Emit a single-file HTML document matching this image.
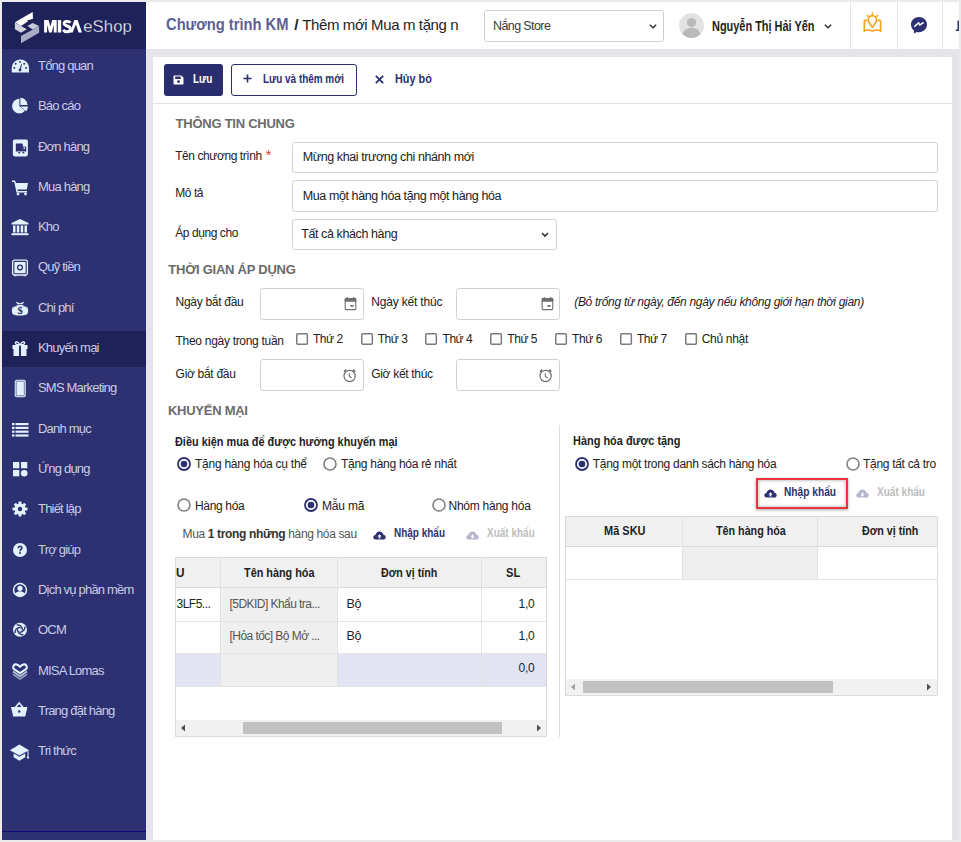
<!DOCTYPE html>
<html><head><meta charset="utf-8">
<style>
*{box-sizing:border-box}
html,body{margin:0;padding:0}
body{width:961px;height:842px;position:relative;overflow:hidden;background:#ebebeb;font-family:"Liberation Sans",sans-serif;font-size:12px;color:#333}
.a{position:absolute}
.t{position:absolute;white-space:nowrap;line-height:1}
.mi{position:absolute;left:38px;font-size:13px;letter-spacing:-0.8px;color:#c9cce6;line-height:1;white-space:nowrap}
.ic{position:absolute;left:11px;width:18px;height:18px;overflow:visible}
</style></head><body>
<div class="a" style="left:2px;top:2px;width:144px;height:838px;background:#2d3071"></div>
<div class="a" style="left:2px;top:2px;width:144px;height:47px;background:#1f2159"></div>
<div class="a" style="left:2px;top:331px;width:144px;height:36px;background:#1f2159"></div>
<div class="a" style="left:2px;top:831px;width:144px;height:1px;background:#170a7a"></div>
<div class="a" style="left:146px;top:2px;width:813px;height:47px;background:#fff"></div>
<div class="a" style="left:146px;top:49px;width:813px;height:791px;background:#e4e5eb"></div>
<div class="a" style="left:153px;top:57px;width:799px;height:783px;background:#fff"></div>
<svg class="a" style="left:12px;top:8px;" width="30" height="38" viewBox="12 8 30 38"><polygon points="14.9,22.2 32.7,12.1 33,18.8 27.3,20.6 27.8,21.5 21,26" fill="#fff"/><polygon points="14.9,22.4 21,26 26.9,29.2 21,32.8 14.9,29.2" fill="#d3d3e2"/><polygon points="27.3,26 32.7,22.9 39.1,26 32.7,29.6" fill="#c9c9dc"/><polygon points="21,36 39.1,26 39.1,32.8 21,43.2" fill="#a9aac3"/></svg>
<svg class="a" style="left:40px;top:14px;" width="100" height="26" viewBox="40 14 100 26"><polygon points="44.1,32.5 44.1,20.1 48.6,20.1 50.4,26.6 52.2,20.1 56.7,20.1 56.7,32.5 53.7,32.5 53.7,24.8 51.7,32.5 49.1,32.5 47.1,24.8 47.1,32.5" fill="#fff"/><rect x="57.8" y="20.1" width="3.4" height="12.4" fill="#fff"/><path d="M70.3 22.8C69.3 21.2 67.9 21.4 66.6 21.4C64.9 21.4 64.2 22.5 64.2 23.6C64.2 26.8 70.4 25.2 70.4 28.9C70.4 30.6 69 31.7 67 31.7C65.3 31.7 63.9 31.1 63.1 29.7" fill="none" stroke="#fff" stroke-width="2.9"/><polygon points="70,32.5 74.3,20.1 77.6,20.1 82,32.5 78.6,32.5 75.9,24.6 72.6,32.5" fill="#fff"/><text x="83.2" y="32.3" font-family="Liberation Sans" font-size="16.6" letter-spacing="0.15" fill="#ffffff" stroke="#1f2159" stroke-width="0.35">eShop</text></svg>
<svg class="ic" style="top:56.9px" viewBox="0 0 18 18"><path d="M0.8 15.6V11.5C0.8 6 4.5 2.5 9.4 2.5C14.3 2.5 18 6 18 11.5V15.6Z" fill="#e4f1fc"/><g fill="#2d3071"><circle cx="3.3" cy="11" r="0.95"/><circle cx="4.7" cy="6.8" r="0.95"/><circle cx="9" cy="4.9" r="0.95"/><circle cx="13.2" cy="6.8" r="0.95"/><circle cx="15" cy="11" r="0.95"/><path d="M8.3 12.8L10.4 6.8L11 7L9.7 13.2Z"/><circle cx="9" cy="13.1" r="1.4"/></g></svg>
<div class="mi" style="top:59.0px">Tổng quan</div>
<svg class="ic" style="top:97.2px" viewBox="0 0 18 18"><path d="M8.4 9.1L8.4 1.8A7.3 7.3 0 1 0 14 13.8Z" fill="#e4f1fc"/><path d="M9.3 8.1L9.3 0.8A7.3 7.3 0 0 1 16.6 8.1Z" fill="#e4f1fc"/><path d="M9.6 9.6L16.9 9.6A7.3 7.3 0 0 1 15.2 14.3Z" fill="#e4f1fc"/></svg>
<div class="mi" style="top:99.0px">Báo cáo</div>
<svg class="ic" style="top:137.5px" viewBox="0 0 18 18"><rect x="1.9" y="1.4" width="15" height="17" rx="1.8" fill="#e4f1fc"/><rect x="4.8" y="5.4" width="7" height="8.2" rx="0.6" fill="#2d3071"/><path d="M11.6 8.4H14.2L15.2 9.6V13.6H11.6Z" fill="#2d3071"/><rect x="12.6" y="9.3" width="1.4" height="1.6" fill="#e4f1fc"/><circle cx="8.2" cy="14.6" r="1.5" fill="#e4f1fc"/><circle cx="8.2" cy="14.6" r="1" fill="#2d3071"/><circle cx="12.4" cy="14.6" r="1.5" fill="#e4f1fc"/><circle cx="12.4" cy="14.6" r="1" fill="#2d3071"/></svg>
<div class="mi" style="top:140.0px">Đơn hàng</div>
<svg class="ic" style="top:177.8px" viewBox="0 0 18 18"><path d="M1 2.5H4L5 5H17L15.8 11.5H6.5L6.8 13H16V14.5H5.5L3.2 4H1Z" fill="#e4f1fc"/><circle cx="7" cy="16" r="1.4" fill="#e4f1fc"/><circle cx="14.5" cy="16" r="1.4" fill="#e4f1fc"/></svg>
<div class="mi" style="top:180.0px">Mua hàng</div>
<svg class="ic" style="top:218.1px" viewBox="0 0 18 18"><path d="M9 1L17.5 5V6.5H0.5V5Z" fill="#e4f1fc"/><rect x="2" y="7.5" width="2.5" height="7" fill="#e4f1fc"/><rect x="5.8" y="7.5" width="2.5" height="7" fill="#e4f1fc"/><rect x="9.7" y="7.5" width="2.5" height="7" fill="#e4f1fc"/><rect x="13.5" y="7.5" width="2.5" height="7" fill="#e4f1fc"/><rect x="0.5" y="15.2" width="17" height="2" fill="#e4f1fc"/></svg>
<div class="mi" style="top:220.0px">Kho</div>
<svg class="ic" style="top:258.5px" viewBox="0 0 18 18"><rect x="1.6" y="1.2" width="14.8" height="14.8" rx="1.8" fill="none" stroke="#e4f1fc" stroke-width="1.3"/><rect x="3.4" y="3" width="11.2" height="11.2" fill="#e4f1fc"/><circle cx="9" cy="8.6" r="2.4" fill="none" stroke="#2d3071" stroke-width="1.3"/><rect x="3" y="16" width="2.5" height="1.2" fill="#e4f1fc"/><rect x="12.5" y="16" width="2.5" height="1.2" fill="#e4f1fc"/></svg>
<div class="mi" style="top:260.0px">Quỹ tiền</div>
<svg class="ic" style="top:298.8px" viewBox="0 0 18 18"><ellipse cx="4.2" cy="11.5" rx="3.3" ry="4.6" fill="#e4f1fc"/><ellipse cx="13.8" cy="11.5" rx="3.3" ry="4.6" fill="#e4f1fc"/><path d="M4.5 2.5L9 4.2L13.5 2.5L11.3 5.6C14.5 7 15.6 10.5 15.6 13C15.6 15.5 13.8 16.5 12 16.5H6C4.2 16.5 2.4 15.5 2.4 13C2.4 10.5 3.5 7 6.7 5.6Z" fill="#e4f1fc"/><path d="M6 5.5L12 5.5" stroke="#2d3071" stroke-width="0.7"/><path d="M2 8.5Q4 6.5 6.5 6.6M16 8.5Q14 6.5 11.5 6.6" fill="none" stroke="#2d3071" stroke-width="0.7"/><text x="9" y="15.3" font-size="10.5" font-weight="700" text-anchor="middle" fill="#2d3071" font-family="Liberation Serif">$</text></svg>
<div class="mi" style="top:301.0px">Chi phí</div>
<svg class="ic" style="top:339.1px" viewBox="0 0 18 18"><rect x="1.5" y="6" width="15" height="4" fill="#e4f1fc"/><rect x="2.5" y="10" width="13" height="7" fill="#e4f1fc"/><rect x="8" y="6" width="2" height="11" fill="#2d3071"/><path d="M9 6C7 2 4 2 4.5 4.5C5 6 9 6 9 6Z M9 6C11 2 14 2 13.5 4.5C13 6 9 6 9 6Z" fill="none" stroke="#e4f1fc" stroke-width="1.4"/></svg>
<div class="mi" style="top:341.0px">Khuyến mại</div>
<svg class="ic" style="top:379.4px" viewBox="0 0 18 18"><rect x="4" y="1" width="10.5" height="17" rx="1.8" fill="#e4f1fc" stroke="#e4f1fc" stroke-width="0.5"/><rect x="5.2" y="2.2" width="8.1" height="14.6" rx="1" fill="none" stroke="#2d3071" stroke-width="0.6"/></svg>
<div class="mi" style="top:381.0px">SMS Marketing</div>
<svg class="ic" style="top:419.7px" viewBox="0 0 18 18"><rect x="1" y="3" width="2.5" height="2.2" fill="#e4f1fc"/><rect x="4.5" y="3" width="13" height="2.2" fill="#e4f1fc"/><rect x="1" y="6.8" width="2.5" height="2.2" fill="#e4f1fc"/><rect x="4.5" y="6.8" width="13" height="2.2" fill="#e4f1fc"/><rect x="1" y="10.6" width="2.5" height="2.2" fill="#e4f1fc"/><rect x="4.5" y="10.6" width="13" height="2.2" fill="#e4f1fc"/><rect x="1" y="14.4" width="2.5" height="2.2" fill="#e4f1fc"/><rect x="4.5" y="14.4" width="13" height="2.2" fill="#e4f1fc"/></svg>
<div class="mi" style="top:422.0px">Danh mục</div>
<svg class="ic" style="top:460.0px" viewBox="0 0 18 18"><rect x="2" y="2" width="6.3" height="6.3" fill="#e4f1fc"/><rect x="10" y="2" width="6.3" height="6.3" fill="#e4f1fc"/><rect x="2" y="10" width="6.3" height="6.3" fill="#e4f1fc"/><circle cx="13.2" cy="13.2" r="3.3" fill="#e4f1fc"/></svg>
<div class="mi" style="top:462.0px">Ứng dụng</div>
<svg class="ic" style="top:500.3px" viewBox="0 0 18 18"><g fill="#e4f1fc"><circle cx="9" cy="9" r="5.5"/><rect x="7.5" y="1.5" width="3" height="15" rx="0.8"/><rect x="7.5" y="1.5" width="3" height="15" rx="0.8" transform="rotate(45 9 9)"/><rect x="7.5" y="1.5" width="3" height="15" rx="0.8" transform="rotate(90 9 9)"/><rect x="7.5" y="1.5" width="3" height="15" rx="0.8" transform="rotate(135 9 9)"/></g><circle cx="9" cy="9" r="2.2" fill="#2d3071"/></svg>
<div class="mi" style="top:502.0px">Thiết lập</div>
<svg class="ic" style="top:540.6px" viewBox="0 0 18 18"><circle cx="9" cy="9" r="7" fill="#e4f1fc"/><path d="M6.5 7.2C6.5 5.5 7.6 4.6 9.1 4.6C10.6 4.6 11.7 5.5 11.7 6.9C11.7 8.6 9.8 8.7 9.8 10.3H8.2C8.2 8 10 7.9 10 6.9C10 6.4 9.6 6.1 9.1 6.1C8.5 6.1 8.1 6.5 8.1 7.2Z" fill="#2d3071"/><rect x="8.2" y="11.2" width="1.7" height="1.7" fill="#2d3071"/></svg>
<div class="mi" style="top:543.0px">Trợ giúp</div>
<svg class="ic" style="top:580.9px" viewBox="0 0 18 18"><circle cx="9" cy="9" r="7.2" fill="#e4f1fc"/><circle cx="9" cy="9" r="5.7" fill="#2d3071"/><circle cx="9" cy="7.3" r="2.6" fill="#e4f1fc"/><path d="M4.2 13.2C5 11 6.8 10.2 9 10.2C11.2 10.2 13 11 13.8 13.2C12.6 14.6 10.9 15.3 9 15.3C7.1 15.3 5.4 14.6 4.2 13.2Z" fill="#e4f1fc"/></svg>
<div class="mi" style="top:583.0px">Dịch vụ phần mềm</div>
<svg class="ic" style="top:621.2px" viewBox="0 0 18 18"><circle cx="9" cy="8.8" r="7" fill="#e4f1fc"/><g fill="none" stroke="#2d3071" stroke-width="1.3"><path d="M11.5 8.8A5.2 5.2 0 0 0 5.6 3.9"/><path d="M11.5 8.8A5.2 5.2 0 0 0 5.6 3.9" transform="rotate(90 9 8.8)"/><path d="M11.5 8.8A5.2 5.2 0 0 0 5.6 3.9" transform="rotate(180 9 8.8)"/><path d="M11.5 8.8A5.2 5.2 0 0 0 5.6 3.9" transform="rotate(270 9 8.8)"/></g><circle cx="9" cy="8.8" r="2.6" fill="#2d3071"/><circle cx="9" cy="8.8" r="1.9" fill="#e4f1fc"/></svg>
<div class="mi" style="top:623.0px">OCM</div>
<svg class="ic" style="top:661.6px" viewBox="0 0 18 18"><g fill="none" stroke-linejoin="round"><path d="M2 12.3L9 17L16 12.3" stroke="#e4f1fc" stroke-opacity="0.55" stroke-width="1.8"/><path d="M2 9.6L9 14.2L16 9.6" stroke="#e4f1fc" stroke-opacity="0.75" stroke-width="1.8"/><path d="M9 11.2L3 7.2C1.3 5.2 2.4 2.2 5 2.4C6.8 2.5 8 3.7 9 4.8C10 3.7 11.2 2.5 13 2.4C15.6 2.2 16.7 5.2 15 7.2Z" stroke="#e4f1fc" stroke-width="2.1"/></g></svg>
<div class="mi" style="top:664.0px">MISA Lomas</div>
<svg class="ic" style="top:701.9px" viewBox="0 0 18 18"><path d="M0 5.1H16.4L14.2 14.4H2.2Z" fill="#e4f1fc"/><path d="M4.5 5.3L8.2 1L11.9 5.3" fill="none" stroke="#e4f1fc" stroke-width="1.6"/><circle cx="8.2" cy="9.5" r="1.2" fill="#2d3071"/></svg>
<div class="mi" style="top:704.0px">Trang đặt hàng</div>
<svg class="ic" style="top:742.2px" viewBox="0 0 18 18"><path d="M8.4 2.6L18 8.2L8.4 13.4L-1.2 8.2Z" fill="#e4f1fc"/><path d="M2.6 11.4V15.3L8.4 18.8L14.2 15.3V11.4L8.4 14.8Z" fill="#e4f1fc"/><path d="M17 8.5V15" stroke="#e4f1fc" stroke-width="1"/><circle cx="17" cy="15.6" r="1.1" fill="#e4f1fc"/></svg>
<div class="mi" style="top:744.0px">Tri thức</div>
<div class="t" style="left:165.7px;top:17.00px;font-size:16px;font-weight:700;color:#5c5f96;letter-spacing:0px;font-style:normal;transform:scaleX(0.9200);transform-origin:0 0">Chương trình KM</div>
<div class="t" style="left:294.3px;top:17.00px;font-size:15.5px;font-weight:700;color:#222;letter-spacing:0px;font-style:normal;">/</div>
<div class="t" style="left:302.2px;top:17.00px;font-size:15px;font-weight:400;color:#1e1e1e;letter-spacing:-0.38px;font-style:normal;">Thêm mới Mua m tặng n</div>
<div class="a" style="left:484px;top:10px;width:180px;height:32px;border:1px solid #cfcfcf;border-radius:3px;background:#fff"></div>
<div class="t" style="left:493.0px;top:20.00px;font-size:12.5px;font-weight:400;color:#3a3a3a;letter-spacing:-0.6px;font-style:normal;">Nắng Store</div>
<svg class="a" style="left:649px;top:24px;" width="8" height="5" viewBox="0 0 8 5"><path d="M0.8 0.8L4 3.8L7.2 0.8" fill="none" stroke="#333" stroke-width="1.5"/></svg>
<svg class="a" style="left:679px;top:13px;" width="25" height="25" viewBox="0 0 25 25"><circle cx="12.5" cy="12.5" r="12.5" fill="#e3e3e3"/><circle cx="12.5" cy="9.5" r="4.6" fill="#b9b9b9"/><path d="M3.5 21C5 16.5 8 15 12.5 15C17 15 20 16.5 21.5 21C19 23.5 16 25 12.5 25C9 25 6 23.5 3.5 21Z" fill="#b9b9b9"/></svg>
<div class="t" style="left:711.8px;top:19.00px;font-size:14px;font-weight:700;color:#222;letter-spacing:0px;font-style:normal;transform:scaleX(0.7811);transform-origin:0 0">Nguyễn Thị Hải Yến</div>
<svg class="a" style="left:824px;top:24px;" width="8" height="5" viewBox="0 0 8 5"><path d="M0.8 0.8L4 3.8L7.2 0.8" fill="none" stroke="#333" stroke-width="1.5"/></svg>
<div class="a" style="left:850px;top:2px;width:1px;height:47px;background:#e6e6e6"></div>
<div class="a" style="left:897px;top:2px;width:1px;height:47px;background:#e6e6e6"></div>
<div class="a" style="left:942px;top:2px;width:1px;height:47px;background:#e6e6e6"></div>
<svg class="a" style="left:858px;top:8px;" width="30" height="30" viewBox="0 0 30 30"><g fill="none" stroke="#f7a11a" stroke-width="1.6" stroke-linecap="round" stroke-linejoin="round"><path d="M11.6 15.2A4.3 4.3 0 1 1 17.2 15.2L14.4 19.2Z"/><path d="M8.4 12.4H7Q6.3 12.4 6.3 13.2V23.4M20.4 12.4H21.8Q22.6 12.4 22.6 13.2V23.4"/><path d="M6.3 22.9Q10 21 14.4 23.1Q18.8 21 22.6 22.9"/><path d="M14.4 5V6.2M9.4 7.6L9.9 8.1M19.4 7.6L18.9 8.1"/></g><circle cx="14.4" cy="17.4" r="0.6" fill="#fff"/></svg>
<svg class="a" style="left:910px;top:16px;" width="18" height="18" viewBox="0 0 18 18"><path d="M9 1C4.5 1 1 4.3 1 8.6C1 11 2.1 13 3.9 14.4V17.5L6.8 15.9C7.5 16.1 8.2 16.2 9 16.2C13.5 16.2 17 12.9 17 8.6C17 4.3 13.5 1 9 1Z" fill="#2d3071"/><polyline points="4.3,10.6 8.7,6.7 9.6,9.1 13.6,6.5" fill="none" stroke="#fff" stroke-width="1.5" stroke-linejoin="round"/></svg>
<svg class="a" style="left:953px;top:18px;" width="7" height="14" viewBox="0 0 7 14"><path d="M5.2 2.5V12.2H2.8" fill="none" stroke="#2d3071" stroke-width="1.5"/></svg>
<div class="a" style="left:164px;top:64px;width:59px;height:32px;background:#2b2e6e;border-radius:3px"></div>
<svg class="a" style="left:173px;top:75px;" width="11" height="10" viewBox="0 0 11 10"><path d="M0.5 1.2C0.5 0.8 0.8 0.5 1.2 0.5H8.3L10.5 2.7V8.8C10.5 9.2 10.2 9.5 9.8 9.5H1.2C0.8 9.5 0.5 9.2 0.5 8.8Z" fill="#fff"/><rect x="2.2" y="1.5" width="5.5" height="2.5" fill="#2b2e6e"/><circle cx="5.5" cy="6.6" r="1.4" fill="#2b2e6e"/></svg>
<div class="t" style="left:192.8px;top:73.00px;font-size:12.5px;font-weight:700;color:#fff;letter-spacing:0px;font-style:normal;transform:scaleX(0.8015);transform-origin:0 0">Lưu</div>
<div class="a" style="left:231px;top:64px;width:126px;height:32px;border:1px solid #2b2e6e;border-radius:3px;background:#fff"></div>
<svg class="a" style="left:243px;top:74px;" width="9" height="9" viewBox="0 0 9 9"><path d="M4.5 0.5V8.5M0.5 4.5H8.5" stroke="#2b2e6e" stroke-width="1.6"/></svg>
<div class="t" style="left:262.5px;top:73.00px;font-size:12.5px;font-weight:700;color:#2b2e6e;letter-spacing:0px;font-style:normal;transform:scaleX(0.7942);transform-origin:0 0">Lưu và thêm mới</div>
<svg class="a" style="left:375px;top:75px;" width="9" height="9" viewBox="0 0 9 9"><path d="M0.8 0.8L8.2 8.2M8.2 0.8L0.8 8.2" stroke="#2b2e6e" stroke-width="1.7"/></svg>
<div class="t" style="left:395.0px;top:73.00px;font-size:12.5px;font-weight:700;color:#2b2e6e;letter-spacing:0px;font-style:normal;transform:scaleX(0.8688);transform-origin:0 0">Hủy bỏ</div>
<div class="a" style="left:153px;top:103px;width:799px;height:1px;background:#e3e3e3"></div>
<div class="t" style="left:175.6px;top:117.00px;font-size:13px;font-weight:700;color:#6b6b6b;letter-spacing:-0.25px;font-style:normal;">THÔNG TIN CHUNG</div>
<div class="t" style="left:175.2px;top:150.00px;font-size:12px;font-weight:400;color:#222;letter-spacing:-0.42px;font-style:normal;">Tên chương trình</div>
<div class="t" style="left:265.8px;top:148.00px;font-size:14.5px;font-weight:400;color:#e53935;letter-spacing:0px;font-style:normal;">*</div>
<div class="a" style="left:292px;top:142px;width:646px;height:31px;border:1px solid #d2d2d2;border-radius:3px"></div>
<div class="t" style="left:302.7px;top:151.00px;font-size:12.5px;font-weight:400;color:#222;letter-spacing:-0.4px;font-style:normal;">Mừng khai trương chi nhánh mới</div>
<div class="t" style="left:175.2px;top:187.00px;font-size:12px;font-weight:400;color:#222;letter-spacing:-0.42px;font-style:normal;">Mô tả</div>
<div class="a" style="left:292px;top:180px;width:646px;height:32px;border:1px solid #d2d2d2;border-radius:3px"></div>
<div class="t" style="left:302.7px;top:190.00px;font-size:12.5px;font-weight:400;color:#222;letter-spacing:-0.4px;font-style:normal;">Mua một hàng hóa tặng một hàng hóa</div>
<div class="t" style="left:175.2px;top:227.00px;font-size:12px;font-weight:400;color:#222;letter-spacing:-0.42px;font-style:normal;">Áp dụng cho</div>
<div class="a" style="left:292px;top:219px;width:265px;height:31px;border:1px solid #d2d2d2;border-radius:3px"></div>
<div class="t" style="left:301.2px;top:228.00px;font-size:12.5px;font-weight:400;color:#222;letter-spacing:-0.4px;font-style:normal;">Tất cả khách hàng</div>
<svg class="a" style="left:541px;top:232px;" width="8" height="6" viewBox="0 0 8 6"><path d="M1 1L4 4L7 1" fill="none" stroke="#333" stroke-width="1.6"/></svg>
<div class="t" style="left:168.3px;top:263.00px;font-size:13px;font-weight:700;color:#6b6b6b;letter-spacing:-0.25px;font-style:normal;">THỜI GIAN ÁP DỤNG</div>
<div class="t" style="left:175.6px;top:296.00px;font-size:12px;font-weight:400;color:#222;letter-spacing:-0.3px;font-style:normal;">Ngày bắt đầu</div>
<div class="a" style="left:260px;top:288px;width:104px;height:32px;border:1px solid #d2d2d2;border-radius:3px"></div>
<svg class="a" style="left:344px;top:297px;" width="13" height="14" viewBox="0 0 13 14"><rect x="1.2" y="1.6" width="10.6" height="11" rx="1" fill="none" stroke="#6f6f6f" stroke-width="1.1"/><rect x="0.7" y="1.1" width="11.6" height="3.6" rx="0.8" fill="#6f6f6f"/><rect x="6.3" y="8" width="3.4" height="1.8" rx="0.5" fill="#6f6f6f"/><rect x="2.6" y="0.1" width="1.4" height="1.5" fill="#6f6f6f"/><rect x="9" y="0.1" width="1.4" height="1.5" fill="#6f6f6f"/></svg>
<div class="t" style="left:371.2px;top:296.00px;font-size:12px;font-weight:400;color:#222;letter-spacing:-0.17px;font-style:normal;">Ngày kết thúc</div>
<div class="a" style="left:456px;top:288px;width:104px;height:32px;border:1px solid #d2d2d2;border-radius:3px"></div>
<svg class="a" style="left:541px;top:297px;" width="13" height="14" viewBox="0 0 13 14"><rect x="1.2" y="1.6" width="10.6" height="11" rx="1" fill="none" stroke="#6f6f6f" stroke-width="1.1"/><rect x="0.7" y="1.1" width="11.6" height="3.6" rx="0.8" fill="#6f6f6f"/><rect x="6.3" y="8" width="3.4" height="1.8" rx="0.5" fill="#6f6f6f"/><rect x="2.6" y="0.1" width="1.4" height="1.5" fill="#6f6f6f"/><rect x="9" y="0.1" width="1.4" height="1.5" fill="#6f6f6f"/></svg>
<div class="t" style="left:574.2px;top:296.00px;font-size:12px;font-weight:400;color:#222;letter-spacing:-0.3px;font-style:italic;">(Bỏ trống từ ngày, đến ngày nếu không giới hạn thời gian)</div>
<div class="t" style="left:175.6px;top:335.00px;font-size:12px;font-weight:400;color:#222;letter-spacing:-0.3px;font-style:normal;">Theo ngày trong tuần</div>
<svg class="a" style="left:295.7px;top:332.5px" width="13" height="13" viewBox="0 0 13 13"><rect x="0.75" y="0.75" width="10.6" height="10.6" rx="1" fill="#fff" stroke="#7a7a7a" stroke-width="1.5"/></svg>
<div class="t" style="left:312.9px;top:333.00px;font-size:12px;font-weight:400;color:#222;letter-spacing:-0.45px;font-style:normal;">Thứ 2</div>
<svg class="a" style="left:360.5px;top:332.5px" width="13" height="13" viewBox="0 0 13 13"><rect x="0.75" y="0.75" width="10.6" height="10.6" rx="1" fill="#fff" stroke="#7a7a7a" stroke-width="1.5"/></svg>
<div class="t" style="left:377.7px;top:333.00px;font-size:12px;font-weight:400;color:#222;letter-spacing:-0.45px;font-style:normal;">Thứ 3</div>
<svg class="a" style="left:425.3px;top:332.5px" width="13" height="13" viewBox="0 0 13 13"><rect x="0.75" y="0.75" width="10.6" height="10.6" rx="1" fill="#fff" stroke="#7a7a7a" stroke-width="1.5"/></svg>
<div class="t" style="left:442.5px;top:333.00px;font-size:12px;font-weight:400;color:#222;letter-spacing:-0.45px;font-style:normal;">Thứ 4</div>
<svg class="a" style="left:490.1px;top:332.5px" width="13" height="13" viewBox="0 0 13 13"><rect x="0.75" y="0.75" width="10.6" height="10.6" rx="1" fill="#fff" stroke="#7a7a7a" stroke-width="1.5"/></svg>
<div class="t" style="left:507.3px;top:333.00px;font-size:12px;font-weight:400;color:#222;letter-spacing:-0.45px;font-style:normal;">Thứ 5</div>
<svg class="a" style="left:554.9px;top:332.5px" width="13" height="13" viewBox="0 0 13 13"><rect x="0.75" y="0.75" width="10.6" height="10.6" rx="1" fill="#fff" stroke="#7a7a7a" stroke-width="1.5"/></svg>
<div class="t" style="left:572.1px;top:333.00px;font-size:12px;font-weight:400;color:#222;letter-spacing:-0.45px;font-style:normal;">Thứ 6</div>
<svg class="a" style="left:619.7px;top:332.5px" width="13" height="13" viewBox="0 0 13 13"><rect x="0.75" y="0.75" width="10.6" height="10.6" rx="1" fill="#fff" stroke="#7a7a7a" stroke-width="1.5"/></svg>
<div class="t" style="left:636.9px;top:333.00px;font-size:12px;font-weight:400;color:#222;letter-spacing:-0.45px;font-style:normal;">Thứ 7</div>
<svg class="a" style="left:684.5px;top:332.5px" width="13" height="13" viewBox="0 0 13 13"><rect x="0.75" y="0.75" width="10.6" height="10.6" rx="1" fill="#fff" stroke="#7a7a7a" stroke-width="1.5"/></svg>
<div class="t" style="left:701.7px;top:333.00px;font-size:12px;font-weight:400;color:#222;letter-spacing:-0.3px;font-style:normal;">Chủ nhật</div>
<div class="t" style="left:175.6px;top:368.00px;font-size:12px;font-weight:400;color:#222;letter-spacing:-0.3px;font-style:normal;">Giờ bắt đầu</div>
<div class="a" style="left:260px;top:359px;width:104px;height:32px;border:1px solid #d2d2d2;border-radius:3px"></div>
<svg class="a" style="left:343px;top:368px;" width="14" height="15" viewBox="0 0 14 15"><circle cx="6.6" cy="8" r="5.6" fill="none" stroke="#6f6f6f" stroke-width="1.2"/><path d="M6.3 5.2V8.3L8.6 10" fill="none" stroke="#6f6f6f" stroke-width="1.1"/><path d="M0.9 3.6L3.3 1.6M12.3 3.6L9.9 1.6" stroke="#6f6f6f" stroke-width="1.5"/></svg>
<div class="t" style="left:371.2px;top:368.00px;font-size:12px;font-weight:400;color:#222;letter-spacing:-0.3px;font-style:normal;">Giờ kết thúc</div>
<div class="a" style="left:456px;top:359px;width:104px;height:32px;border:1px solid #d2d2d2;border-radius:3px"></div>
<svg class="a" style="left:539px;top:368px;" width="14" height="15" viewBox="0 0 14 15"><circle cx="6.6" cy="8" r="5.6" fill="none" stroke="#6f6f6f" stroke-width="1.2"/><path d="M6.3 5.2V8.3L8.6 10" fill="none" stroke="#6f6f6f" stroke-width="1.1"/><path d="M0.9 3.6L3.3 1.6M12.3 3.6L9.9 1.6" stroke="#6f6f6f" stroke-width="1.5"/></svg>
<div class="t" style="left:167.9px;top:404.00px;font-size:13px;font-weight:700;color:#6b6b6b;letter-spacing:-0.25px;font-style:normal;">KHUYẾN MẠI</div>
<div class="a" style="left:559px;top:425px;width:1px;height:312px;background:#dedede"></div>
<div class="t" style="left:175.0px;top:436.00px;font-size:12.5px;font-weight:700;color:#222;letter-spacing:0px;font-style:normal;transform:scaleX(0.8713);transform-origin:0 0">Điều kiện mua để được hưởng khuyến mại</div>
<svg class="a" style="left:177px;top:457px;" width="14" height="14" viewBox="0 0 14 14"><circle cx="7" cy="7" r="6" fill="#fff" stroke="#2d3071" stroke-width="1.8"/><circle cx="7" cy="7" r="3.3" fill="#2d3071"/></svg>
<div class="t" style="left:195.0px;top:458.00px;font-size:12px;font-weight:400;color:#222;letter-spacing:-0.25px;font-style:normal;">Tặng hàng hóa cụ thể</div>
<svg class="a" style="left:323px;top:457px;" width="14" height="14" viewBox="0 0 14 14"><circle cx="7" cy="7" r="6" fill="#fff" stroke="#808080" stroke-width="1.6"/></svg>
<div class="t" style="left:341.0px;top:458.00px;font-size:12px;font-weight:400;color:#222;letter-spacing:-0.28px;font-style:normal;">Tặng hàng hóa rẻ nhất</div>
<svg class="a" style="left:177px;top:498px;" width="14" height="14" viewBox="0 0 14 14"><circle cx="7" cy="7" r="6" fill="#fff" stroke="#808080" stroke-width="1.6"/></svg>
<div class="t" style="left:195.0px;top:500.00px;font-size:12px;font-weight:400;color:#222;letter-spacing:-0.33px;font-style:normal;">Hàng hóa</div>
<svg class="a" style="left:304px;top:498px;" width="14" height="14" viewBox="0 0 14 14"><circle cx="7" cy="7" r="6" fill="#fff" stroke="#2d3071" stroke-width="1.8"/><circle cx="7" cy="7" r="3.3" fill="#2d3071"/></svg>
<div class="t" style="left:322.0px;top:500.00px;font-size:12px;font-weight:400;color:#222;letter-spacing:-0.2px;font-style:normal;">Mẫu mã</div>
<svg class="a" style="left:432px;top:498px;" width="14" height="14" viewBox="0 0 14 14"><circle cx="7" cy="7" r="6" fill="#fff" stroke="#808080" stroke-width="1.6"/></svg>
<div class="t" style="left:448.5px;top:500.00px;font-size:12px;font-weight:400;color:#222;letter-spacing:-0.25px;font-style:normal;">Nhóm hàng hóa</div>
<div class="t" style="left:182.5px;top:528.4px;font-size:12px;letter-spacing:-0.35px;color:#555">Mua <b style="color:#333">1 trong những</b> hàng hóa sau</div>
<svg class="a" style="left:372.5px;top:530.5px;" width="13" height="9" viewBox="0 0 13 9"><path d="M2.8 8.6C1.3 8.6 0.3 7.6 0.3 6.3C0.3 5.1 1.2 4.2 2.4 4.1C2.9 2 4.5 0.4 6.5 0.4C8.5 0.4 10 1.8 10.5 3.7C11.7 3.9 12.7 4.9 12.7 6.2C12.7 7.6 11.6 8.6 10.2 8.6Z" fill="#2d3071"/><path d="M6.5 3.2L8.6 5.6H7.3V7.6H5.7V5.6H4.4Z" fill="#fff"/></svg>
<div class="t" style="left:394.0px;top:527.00px;font-size:12px;font-weight:700;color:#2d3071;letter-spacing:0px;font-style:normal;transform:scaleX(0.8314);transform-origin:0 0">Nhập khẩu</div>
<svg class="a" style="left:465.5px;top:530.5px;" width="13" height="9" viewBox="0 0 13 9"><path d="M2.8 8.6C1.3 8.6 0.3 7.6 0.3 6.3C0.3 5.1 1.2 4.2 2.4 4.1C2.9 2 4.5 0.4 6.5 0.4C8.5 0.4 10 1.8 10.5 3.7C11.7 3.9 12.7 4.9 12.7 6.2C12.7 7.6 11.6 8.6 10.2 8.6Z" fill="#b3b5cc"/><path d="M6.5 7.8L8.6 5.4H7.3V3.4H5.7V5.4H4.4Z" fill="#fff"/></svg>
<div class="t" style="left:486.7px;top:527.00px;font-size:12px;font-weight:700;color:#bdbdbd;letter-spacing:0px;font-style:normal;transform:scaleX(0.8333);transform-origin:0 0">Xuất khẩu</div>
<div class="a" style="left:175px;top:557px;width:372px;height:180px;border:1px solid #dcdcdc;background:#fff"></div>
<div class="a" style="left:176px;top:558px;width:370px;height:29px;background:#f0f0f0"></div>
<div class="a" style="left:176px;top:587px;width:370px;height:1px;background:#dcdcdc"></div>
<div class="a" style="left:221px;top:588px;width:116px;height:66px;background:#efefef"></div>
<div class="a" style="left:176px;top:654px;width:370px;height:32px;background:#e2e4f1"></div>
<div class="a" style="left:221px;top:654px;width:116px;height:32px;background:#efefef"></div>
<div class="a" style="left:176px;top:621px;width:370px;height:1px;background:#e4e4e4"></div>
<div class="a" style="left:176px;top:653px;width:370px;height:1px;background:#e4e4e4"></div>
<div class="a" style="left:176px;top:686px;width:370px;height:1px;background:#e4e4e4"></div>
<div class="a" style="left:220px;top:558px;width:1px;height:128px;background:#e2e2e2"></div>
<div class="a" style="left:337px;top:558px;width:1px;height:128px;background:#e2e2e2"></div>
<div class="a" style="left:481px;top:558px;width:1px;height:128px;background:#e2e2e2"></div>
<div class="t" style="left:176.2px;top:566.00px;font-size:13px;font-weight:700;color:#222;letter-spacing:0px;font-style:normal;transform:scaleX(0.9052);transform-origin:0 0">U</div>
<div class="t" style="left:244.0px;top:566.00px;font-size:13px;font-weight:700;color:#222;letter-spacing:0px;font-style:normal;transform:scaleX(0.8343);transform-origin:0 0">Tên hàng hóa</div>
<div class="t" style="left:381.0px;top:566.00px;font-size:13px;font-weight:700;color:#222;letter-spacing:0px;font-style:normal;transform:scaleX(0.8223);transform-origin:0 0">Đơn vị tính</div>
<div class="t" style="left:505.6px;top:566.00px;font-size:13px;font-weight:700;color:#222;letter-spacing:0px;font-style:normal;transform:scaleX(0.8541);transform-origin:0 0">SL</div>
<div class="t" style="left:176.5px;top:598.00px;font-size:12px;font-weight:400;color:#222;letter-spacing:-0.5px;font-style:normal;">3LF5...</div>
<div class="t" style="left:229.5px;top:598.00px;font-size:12px;font-weight:400;color:#555;letter-spacing:-0.55px;font-style:normal;">[5DKID] Khẩu tra...</div>
<div class="t" style="left:346.4px;top:598.00px;font-size:12.5px;font-weight:400;color:#222;letter-spacing:-0.3px;font-style:normal;">Bộ</div>
<div class="t" style="left:518.5px;top:598.00px;font-size:12px;font-weight:400;color:#222;letter-spacing:-0.2px;font-style:normal;">1,0</div>
<div class="t" style="left:229.5px;top:630.00px;font-size:12px;font-weight:400;color:#555;letter-spacing:-0.55px;font-style:normal;">[Hỏa tốc] Bộ Mở ...</div>
<div class="t" style="left:346.4px;top:630.00px;font-size:12.5px;font-weight:400;color:#222;letter-spacing:-0.3px;font-style:normal;">Bộ</div>
<div class="t" style="left:518.5px;top:630.00px;font-size:12px;font-weight:400;color:#222;letter-spacing:-0.2px;font-style:normal;">1,0</div>
<div class="t" style="left:518.5px;top:662.00px;font-size:12px;font-weight:400;color:#222;letter-spacing:-0.2px;font-style:normal;">0,0</div>
<div class="a" style="left:176px;top:720px;width:370px;height:16px;background:#f1f1f1"></div>
<div class="a" style="left:243px;top:722px;width:259px;height:12px;background:#c1c1c1"></div>
<svg class="a" style="left:180px;top:724px;" width="6" height="8" viewBox="0 0 6 8"><path d="M5 0.5V7.5L1 4Z" fill="#505050"/></svg>
<svg class="a" style="left:536px;top:724px;" width="6" height="8" viewBox="0 0 6 8"><path d="M1 0.5V7.5L5 4Z" fill="#505050"/></svg>
<div class="t" style="left:573.0px;top:435.00px;font-size:12.5px;font-weight:700;color:#222;letter-spacing:0px;font-style:normal;transform:scaleX(0.8753);transform-origin:0 0">Hàng hóa được tặng</div>
<svg class="a" style="left:575px;top:457px;" width="14" height="14" viewBox="0 0 14 14"><circle cx="7" cy="7" r="6" fill="#fff" stroke="#2d3071" stroke-width="1.8"/><circle cx="7" cy="7" r="3.3" fill="#2d3071"/></svg>
<div class="t" style="left:592.8px;top:458.00px;font-size:12px;font-weight:400;color:#222;letter-spacing:-0.3px;font-style:normal;">Tặng một trong danh sách hàng hóa</div>
<svg class="a" style="left:845.5px;top:457px;" width="14" height="14" viewBox="0 0 14 14"><circle cx="7" cy="7" r="6" fill="#fff" stroke="#808080" stroke-width="1.6"/></svg>
<div class="t" style="left:863.0px;top:458.00px;font-size:12px;font-weight:400;color:#222;letter-spacing:-0.3px;font-style:normal;">Tặng tất cả tro</div>
<div class="a" style="left:756px;top:478px;width:92px;height:31px;border:2px solid #e8343a;box-shadow:0 1px 3px rgba(0,0,0,.35), inset 0 0 3px 1px rgba(0,0,0,.22)"></div>
<svg class="a" style="left:763.8px;top:489px;" width="13" height="9" viewBox="0 0 13 9"><path d="M2.8 8.6C1.3 8.6 0.3 7.6 0.3 6.3C0.3 5.1 1.2 4.2 2.4 4.1C2.9 2 4.5 0.4 6.5 0.4C8.5 0.4 10 1.8 10.5 3.7C11.7 3.9 12.7 4.9 12.7 6.2C12.7 7.6 11.6 8.6 10.2 8.6Z" fill="#2d3071"/><path d="M6.5 3.2L8.6 5.6H7.3V7.6H5.7V5.6H4.4Z" fill="#fff"/></svg>
<div class="t" style="left:784.0px;top:486.00px;font-size:12px;font-weight:700;color:#2d3071;letter-spacing:0px;font-style:normal;transform:scaleX(0.8477);transform-origin:0 0">Nhập khẩu</div>
<svg class="a" style="left:855.5px;top:489px;" width="13" height="9" viewBox="0 0 13 9"><path d="M2.8 8.6C1.3 8.6 0.3 7.6 0.3 6.3C0.3 5.1 1.2 4.2 2.4 4.1C2.9 2 4.5 0.4 6.5 0.4C8.5 0.4 10 1.8 10.5 3.7C11.7 3.9 12.7 4.9 12.7 6.2C12.7 7.6 11.6 8.6 10.2 8.6Z" fill="#b3b5cc"/><path d="M6.5 7.8L8.6 5.4H7.3V3.4H5.7V5.4H4.4Z" fill="#fff"/></svg>
<div class="t" style="left:877.0px;top:486.00px;font-size:12px;font-weight:700;color:#bdbdbd;letter-spacing:0px;font-style:normal;transform:scaleX(0.8368);transform-origin:0 0">Xuất khẩu</div>
<div class="a" style="left:565px;top:516px;width:373px;height:180px;border:1px solid #dcdcdc;background:#fff"></div>
<div class="a" style="left:566px;top:517px;width:371px;height:29px;background:#f0f0f0"></div>
<div class="a" style="left:566px;top:546px;width:371px;height:1px;background:#dcdcdc"></div>
<div class="a" style="left:683px;top:547px;width:135px;height:32px;background:#efefef"></div>
<div class="a" style="left:566px;top:579px;width:371px;height:1px;background:#e4e4e4"></div>
<div class="a" style="left:682px;top:517px;width:1px;height:62px;background:#e2e2e2"></div>
<div class="a" style="left:817px;top:517px;width:1px;height:62px;background:#e2e2e2"></div>
<div class="t" style="left:603.5px;top:524.00px;font-size:13px;font-weight:700;color:#222;letter-spacing:0px;font-style:normal;transform:scaleX(0.8448);transform-origin:0 0">Mã SKU</div>
<div class="t" style="left:715.5px;top:524.00px;font-size:13px;font-weight:700;color:#222;letter-spacing:0px;font-style:normal;transform:scaleX(0.8260);transform-origin:0 0">Tên hàng hóa</div>
<div class="t" style="left:862.0px;top:524.00px;font-size:13px;font-weight:700;color:#222;letter-spacing:0px;font-style:normal;transform:scaleX(0.8223);transform-origin:0 0">Đơn vị tính</div>
<div class="a" style="left:566px;top:679px;width:371px;height:16px;background:#f1f1f1"></div>
<div class="a" style="left:583px;top:681px;width:250px;height:12px;background:#c1c1c1"></div>
<svg class="a" style="left:570px;top:683px;" width="6" height="8" viewBox="0 0 6 8"><path d="M5 0.5V7.5L1 4Z" fill="#a3a3a3"/></svg>
<svg class="a" style="left:926px;top:683px;" width="6" height="8" viewBox="0 0 6 8"><path d="M1 0.5V7.5L5 4Z" fill="#505050"/></svg>
</body></html>
